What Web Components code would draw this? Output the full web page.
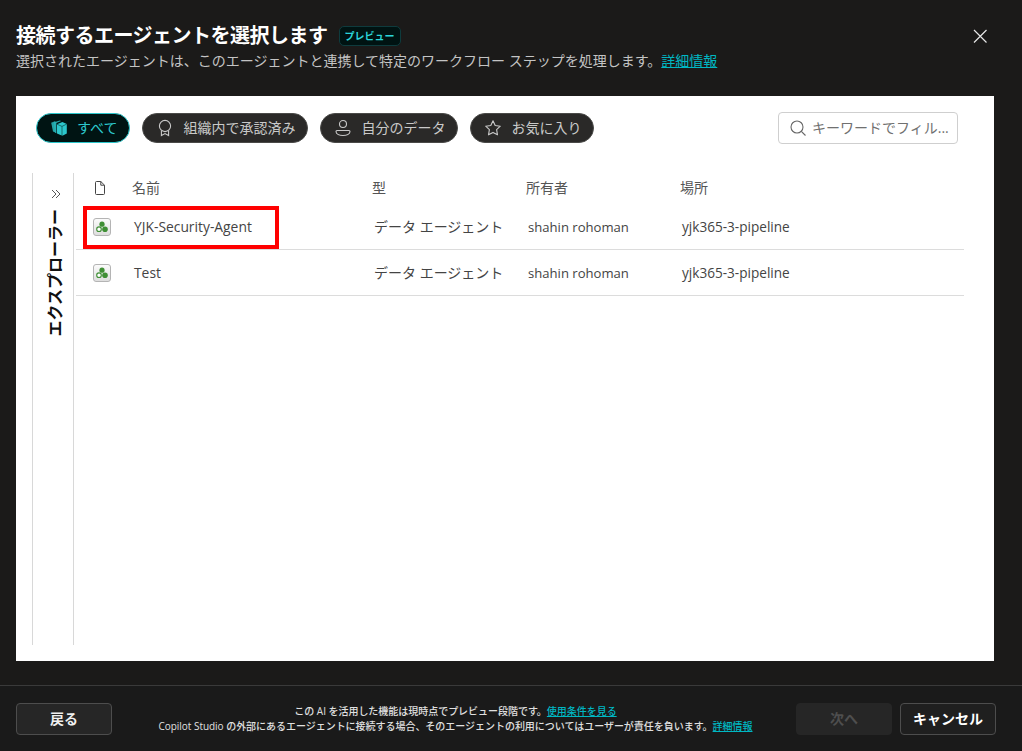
<!DOCTYPE html>
<html lang="ja"><head><meta charset="utf-8"><title>接続するエージェントを選択します</title>
<style>
html,body{margin:0;padding:0;background:#1b1a19;height:100%;overflow:hidden}
body{font-family:"Open Sans","Noto Sans CJK JP",sans-serif}
</style></head><body>
<connect-dialog>
  <dialog-header slot="header"></dialog-header>
  <filter-bar slot="filters">
    <filter-pill active icon="all">すべて</filter-pill>
    <filter-pill icon="badge">組織内で承認済み</filter-pill>
    <filter-pill icon="person">自分のデータ</filter-pill>
    <filter-pill icon="star">お気に入り</filter-pill>
    <search-box></search-box>
  </filter-bar>
  <explorer-rail slot="rail"></explorer-rail>
  <agent-table slot="table">
    <agent-row selected name="YJK-Security-Agent" type="データ エージェント" owner="shahin rohoman" place="yjk365-3-pipeline"></agent-row>
    <agent-row name="Test" type="データ エージェント" owner="shahin rohoman" place="yjk365-3-pipeline"></agent-row>
  </agent-table>
  <dialog-footer slot="footer"></dialog-footer>
</connect-dialog>
<script>
const FONT='"Open Sans","Noto Sans CJK JP",sans-serif';
function def(name,html,init){
  customElements.define(name,class extends HTMLElement{
    constructor(){super();this.attachShadow({mode:'open'}).innerHTML=html;}
    connectedCallback(){if(init)init(this,this.shadowRoot);}
  });
}
def('connect-dialog',`<style>
:host{display:flex;flex-direction:column;height:751px;width:1022px;color:#fff;font-family:${FONT};box-sizing:border-box}
.panel{background:#fff;margin:0 28px 0 16px;flex:1;display:flex;flex-direction:column;min-height:0;padding:16px 30px 16px 16px;box-sizing:border-box}
.body{display:flex;flex:1;min-height:0;margin-top:29px}
</style><slot name="header"></slot>
<div class="panel"><slot name="filters"></slot><div class="body"><slot name="rail"></slot><slot name="table"></slot></div></div>
<slot name="footer"></slot>`);
def('dialog-header',`<style>
:host{display:block;height:96px;box-sizing:border-box;padding:22px 16px 0;position:relative}
.t{display:flex;align-items:center;gap:11px;height:28px}
h1{margin:0;font-size:20px;font-weight:700;line-height:28px;color:#fff;letter-spacing:-.5px}
.badge{font-size:10px;font-weight:700;color:#2bd4d9;background:#001312;border:1px solid #0e3b3d;border-radius:5px;height:18px;line-height:18px;padding:0 5px;margin-top:-1px}
p{margin:0;font-size:14px;line-height:22px;color:#c4c4c4;white-space:pre}
a{color:#00b7c3;text-decoration:underline}
button{all:unset;position:absolute;right:33px;top:27px;width:18px;height:18px;display:block}
svg{display:block}
</style><div class="t"><h1>接続するエージェントを選択します</h1><span class="badge">プレビュー</span></div>
<p>選択されたエージェントは、このエージェントと連携して特定のワークフロー ステップを処理します。<a>詳細情報</a></p>
<button aria-label="閉じる"><svg width="18" height="18" viewBox="0 0 18 18" fill="none" stroke="#e6e6e6" stroke-width="1.2"><path d="M3 3l12.5 12.5M15.5 3L3 15.5"/></svg></button>`);
def('filter-bar',`<style>
:host{display:flex;align-items:center;gap:12px;padding-left:4px;padding-right:6px;height:32px}
::slotted(search-box){margin-left:auto}
</style><slot></slot>`);
const ICONS={
 all:`<svg width="18" height="18" viewBox="0 0 18 18"><path d="M1.200 3.800L5.400 2v11.600l-2.400-1z" fill="#2cc7cc" opacity=".8"/><path d="M4.400 3.200L9.600 1.400l1.600.7-4.800 2v10.200l-1.400-.6z" fill="#2cc7cc" opacity=".8"/><path d="M7 5.200l5.400-2.200 4.400 2v9.400l-4.400 2.400L7 14.600z" fill="#2cc7cc"/><path d="M7 5.200l5 2.200 4.800-2.400M12 7.400v9.400" fill="none" stroke="#001413" stroke-width=".5"/></svg>`,
 badge:`<svg width="18" height="18" viewBox="0 0 18 18" fill="none" stroke="#c9c9c9" stroke-width="1.1"><circle cx="9" cy="7" r="5.6"/><path d="M5.4 11.4V16.5L9 14.6l3.6 1.9v-5.1"/></svg>`,
 person:`<svg width="18" height="18" viewBox="0 0 18 18" fill="none" stroke="#c9c9c9" stroke-width="1.1"><circle cx="9" cy="5" r="3.5"/><path d="M3 11.5h12c.6 0 1 .4 1 1 0 2.600-3.600 4-7 4s-7-1.400-7-4c0-.6.400-1 1-1z"/></svg>`,
 star:`<svg width="18" height="18" viewBox="0 0 18 18" fill="none" stroke="#c9c9c9" stroke-width="1.1" stroke-linejoin="round"><path d="M9 1.800l2.200 4.700 5.100.7-3.700 3.500.9 5.100L9 13.400l-4.500 2.400.9-5.100L1.700 7.200l5.100-.7z"/></svg>`
};
def('filter-pill',`<style>
:host{display:inline-flex;align-items:center;height:30px;box-sizing:border-box;border-radius:15px;background:#2a2928;border:1px solid #4a4a48;color:#c9c9c9;font-size:14px;padding:0 12px 0 13px;gap:9px;white-space:nowrap;line-height:20px}
:host([active]){background:#001413;border-color:#2cc7cc;color:#2cc7cc}
#i{width:18px;height:18px;display:block}
svg{display:block}
</style><span id="i"></span><slot></slot>`,(el,sr)=>{sr.getElementById('i').innerHTML=ICONS[el.getAttribute('icon')];});
def('search-box',`<style>
:host{display:flex;align-items:center;box-sizing:border-box;width:180px;height:32px;border:1px solid #cfcfcf;border-radius:4px;background:#fff;padding:0 9px 0 10px;gap:5px;color:#707070;font-size:14px;white-space:nowrap;overflow:hidden}
svg{flex:none;display:block}
span{position:relative;top:-1px}
</style><svg width="18" height="18" viewBox="0 0 18 18" fill="none" stroke="#666" stroke-width="1.1"><circle cx="8" cy="8" r="6"/><path d="M12.300 12.300l4.200 4.200"/></svg><span>キーワードでフィル...</span>`);
def('explorer-rail',`<style>
:host{display:flex;flex-direction:column;align-items:center;width:42px;box-sizing:border-box;border-left:1px solid #d8d8d8;border-right:1px solid #d8d8d8;flex:none}
svg{display:block;margin:15px 0 0 6px}
.v{margin:9px 0 0 3px;writing-mode:vertical-rl;text-orientation:sideways;transform:rotate(180deg);font-size:16px;font-weight:700;color:#111;line-height:20px;white-space:nowrap}
</style><svg width="12" height="12" viewBox="0 0 12 12" fill="none" stroke="#555" stroke-width="1"><path d="M2 2l4 4-4 4M6 2l4 4-4 4"/></svg><div class="v">エクスプローラー</div>`);
def('agent-table',`<style>
:host{display:block;flex:1;padding-left:2px;color:#444;font-size:14px;position:relative}
.h{display:grid;grid-template-columns:56px 240px 154px 154px 1fr;height:29px;padding-bottom:2px;align-items:center;color:#555;line-height:20px}
svg{display:block;margin-left:18px}
</style><div class="h"><span><svg width="12" height="14" viewBox="0 0 12 14" fill="none" stroke="#444" stroke-width="1"><path d="M1.500 1.500a1 1 0 0 1 1-1h4.300l3.700 3.700v8.300a1 1 0 0 1-1 1h-7a1 1 0 0 1-1-1z"/><path d="M6.800.5v3.700h3.700"/></svg></span><span>名前</span><span>型</span><span>所有者</span><span>場所</span></div><slot></slot>`);
def('agent-row',`<style>
:host{display:grid;grid-template-columns:56px 240px 154px 154px 1fr;height:46px;box-sizing:border-box;border-bottom:1px solid #dcdcdc;align-items:center;position:relative;color:#444;font-size:14px;line-height:20px}
.c{padding-left:2px;white-space:nowrap}
#n{font-size:13.85px}
#o{font-size:13.1px}
#p{font-size:13.6px}
.ic{margin-left:17px;width:18px;height:18px;box-sizing:border-box;border:1px solid #b4b4b4;border-radius:3px;background:linear-gradient(#fbfbfb,#dedede);display:flex;align-items:center;justify-content:center}
svg{display:block}
.mark{display:none;position:absolute;left:7px;top:2px;width:196px;height:43px;box-sizing:border-box;border:4px solid #f00}
:host([selected]) .mark{display:block}
</style><span><div class="ic"><svg width="14" height="14" viewBox="0 0 14 14"><circle cx="7" cy="4.200" r="2.600" fill="#3f8f35"/><circle cx="10" cy="9.200" r="2.800" fill="#3f8f35"/><circle cx="4" cy="9.200" r="2.300" fill="#fff" stroke="#3f8f35" stroke-width="1.100"/></svg></div></span>
<span class="c" id="n"></span><span class="c" id="t"></span><span class="c" id="o"></span><span class="c" id="p"></span><div class="mark"></div>`,(el,sr)=>{
 for(const [i,a] of [['n','name'],['t','type'],['o','owner'],['p','place']])sr.getElementById(i).textContent=el.getAttribute(a);
});
def('dialog-footer',`<style>
:host{display:flex;align-items:center;height:66px;margin-top:24px;box-sizing:border-box;border-top:1px solid #3a3a3a;padding:0 26px 0 16px;background:#1a1a1a}
button{all:unset;box-sizing:border-box;width:96px;height:32px;border:1px solid #4d4d4d;border-radius:4px;font-size:14px;font-weight:700;color:#fff;text-align:center;line-height:30px;flex:none;background:#1f1f1f}
.back{background:#262626;color:#f0f0f0}
.next{background:#262626;border-color:#262626;color:#4e4e4e;margin-right:8px}
.mid{flex:1;text-align:center;font-size:10px;line-height:15px;color:#e0e0e0;font-weight:500;white-space:nowrap;padding:1px 0 0 3px;letter-spacing:-.03px}
a{color:#00b7c3;text-decoration:underline}
</style><button class="back">戻る</button>
<div class="mid">この AI を活用した機能は現時点でプレビュー段階です。<a>使用条件を見る</a><br>Copilot Studio の外部にあるエージェントに接続する場合、そのエージェントの利用についてはユーザーが責任を負います。<a>詳細情報</a></div>
<button class="next">次へ</button><button>キャンセル</button>`);
</script></body></html>
